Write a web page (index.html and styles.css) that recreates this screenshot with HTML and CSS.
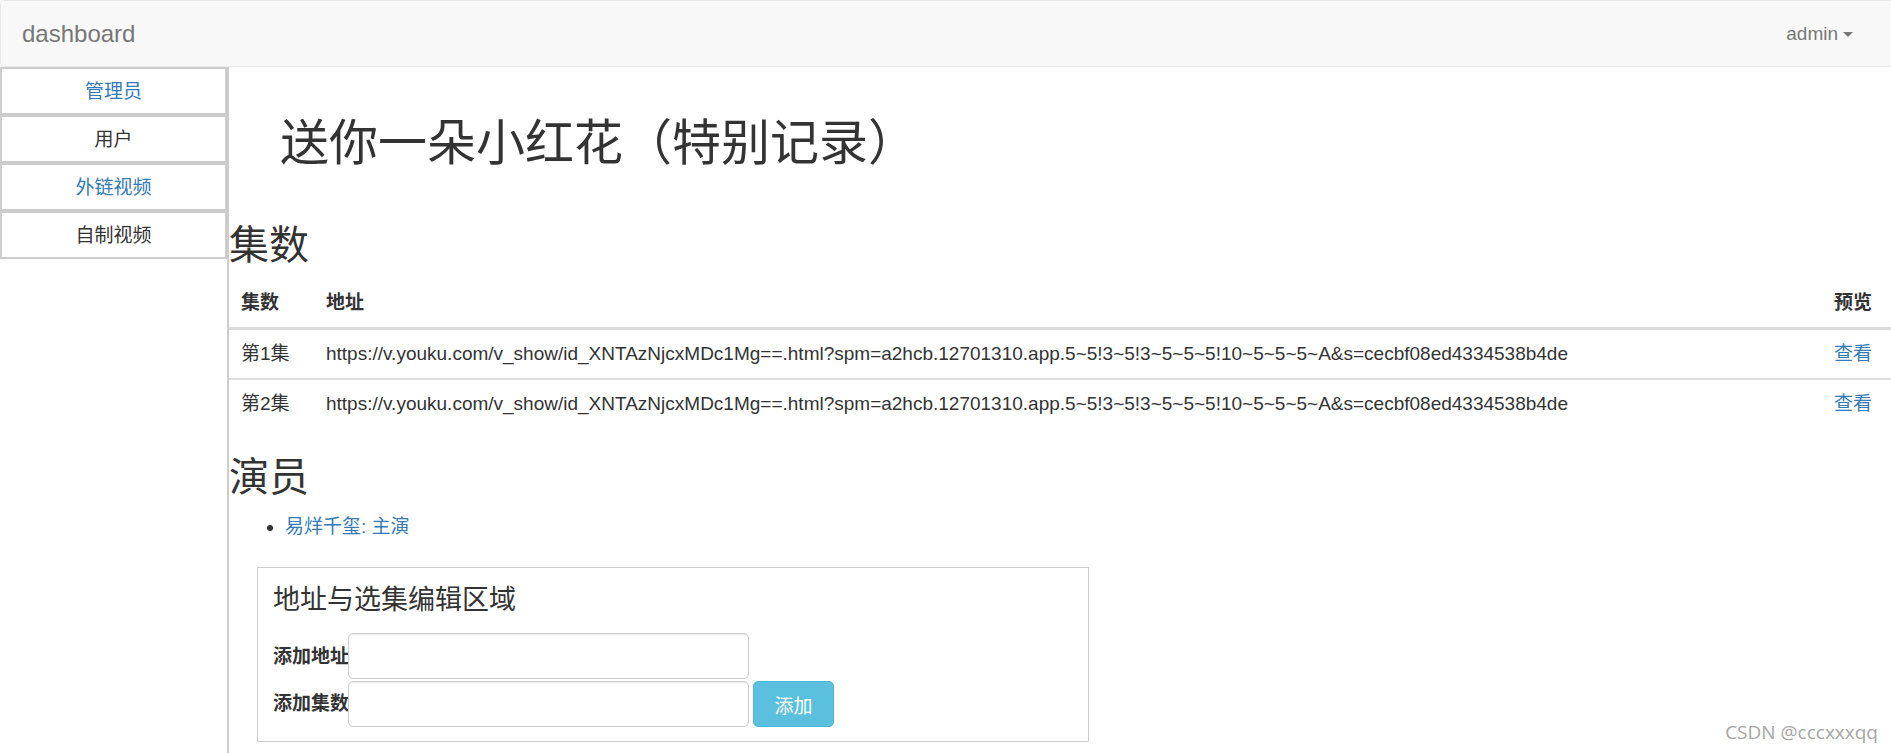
FILE: index.html
```html
<!DOCTYPE html>
<html>

	<head>
		<meta charset="utf-8" />
		<title>dashboard</title>
		<link rel="stylesheet" href="styles.css">
	</head>

	<body>
		<div class="navbar">
			<a class="brand" href="#">dashboard</a>
			<a class="user" href="#">admin<span class="caret"></span></a>
		</div>

		<div class="wrap">
			<div class="sidebar">
				<a class="side-item link" href="#">管理员</a>
				<a class="side-item" href="#">用户</a>
				<a class="side-item link" href="#">外链视频</a>
				<a class="side-item" href="#">自制视频</a>
			</div>

			<div class="main">
				<h1 class="page-title">送你一朵小红花（特别记录）</h1>

				<h2>集数</h2>
				<table class="list">
					<colgroup>
						<col class="col-num" />
						<col />
						<col class="col-view" />
					</colgroup>
					<thead>
						<tr>
							<th>集数</th>
							<th>地址</th>
							<th>预览</th>
						</tr>
					</thead>
					<tbody>
						<tr>
							<td>第1集</td>
							<td>https://v.youku.com/v_show/id_XNTAzNjcxMDc1Mg==.html?spm=a2hcb.12701310.app.5~5!3~5!3~5~5~5!10~5~5~5~A&amp;s=cecbf08ed4334538b4de</td>
							<td><a href="#">查看</a></td>
						</tr>
						<tr>
							<td>第2集</td>
							<td>https://v.youku.com/v_show/id_XNTAzNjcxMDc1Mg==.html?spm=a2hcb.12701310.app.5~5!3~5!3~5~5~5!10~5~5~5~A&amp;s=cecbf08ed4334538b4de</td>
							<td><a href="#">查看</a></td>
						</tr>
					</tbody>
				</table>

				<h2 class="actors">演员</h2>
				<ul class="actor-list">
					<li><a href="#">易烊千玺: 主演</a></li>
				</ul>

				<div class="edit-box">
					<h3>地址与选集编辑区域</h3>
					<div class="form-row">
						<label>添加地址</label><input type="text" />
					</div>
					<div class="form-row">
						<label>添加集数</label><input type="text" /><button type="button">添加</button>
					</div>
				</div>
			</div>
		</div>

		<div class="mark">CSDN @cccxxxqq</div>
	</body>

</html>
```

FILE: styles.css
```css
* {
	box-sizing: border-box;
}

body {
	margin: 0;
	font-family: "Liberation Sans", "Noto Sans CJK SC", sans-serif;
	font-size: 19px;
	line-height: 27px;
	color: #333;
	background: #fff;
	position: relative;
	min-height: 753px;
	overflow: hidden;
}

a {
	color: #337ab7;
	text-decoration: none;
}

.navbar {
	height: 67px;
	background: #f8f8f8;
	border: 1px solid #e7e7e7;
	border-right: 0;
	border-radius: 5px 0 0 5px;
	display: flex;
	align-items: center;
	justify-content: space-between;
	padding: 0 38px 0 21px;
}

.brand {
	color: #777;
	font-size: 24px;
	line-height: 27px;
}

.user {
	color: #777;
	font-size: 19px;
	display: flex;
	align-items: center;
}

.caret {
	display: inline-block;
	width: 0;
	height: 0;
	margin-left: 5px;
	margin-top: 2px;
	border-top: 5px solid #777;
	border-left: 5px solid transparent;
	border-right: 5px solid transparent;
}

.wrap {
	display: flex;
	min-height: 686px;
}

.sidebar {
	width: 229px;
	flex-shrink: 0;
	border-right: 2px solid #ccc;
}

.side-item {
	display: block;
	height: 48px;
	padding: 9px 0 8px;
	border: 2px solid #ccc;
	text-align: center;
	color: #333;
}

.side-item.link {
	color: #337ab7;
}

.main {
	flex: 1;
	min-width: 0;
}

.page-title {
	font-size: 49px;
	font-weight: normal;
	line-height: 54px;
	margin: 49px 0 53px 51px;
}

h2 {
	font-size: 40px;
	font-weight: normal;
	line-height: 44px;
	margin: 23px 0 11px;
}

.list {
	width: 100%;
	table-layout: fixed;
	border-collapse: collapse;
	margin-bottom: 27px;
}

.col-num {
	width: 85px;
}

.col-view {
	width: 69px;
}

.list th,
.list td {
	text-align: left;
	padding: 10px 12px 11px;
	white-space: nowrap;
}

.list th {
	font-weight: bold;
	padding: 11px 12px;
	border-bottom: 3px solid #ddd;
}

.list td {
	border-top: 2px solid #ddd;
}

.list tbody tr:first-child td {
	border-top: 0;
}

.actor-list {
	margin: 14px 0 0;
	padding-left: 56px;
}

.edit-box {
	margin: 27px 0 0 28px;
	width: 832px;
	border: 1px solid #ccc;
	padding: 0 15px 13px;
}

.edit-box h3 {
	font-size: 27px;
	font-weight: normal;
	line-height: 30px;
	margin: 17px 0 18px;
}

.form-row {
	display: flex;
	align-items: center;
	margin-bottom: 1px;
}

.form-row label {
	font-weight: bold;
	white-space: nowrap;
	margin-right: -1px;
}

.form-row input {
	width: 401px;
	height: 46px;
	border: 1px solid #ccc;
	border-radius: 5px;
	box-shadow: inset 0 1px 1px rgba(0, 0, 0, .075);
	font-size: 19px;
	padding: 0 12px;
}

.form-row button {
	width: 81px;
	height: 46px;
	margin: 1px 0 0 4px;
	background: #5bc0de;
	border: 1px solid #46b8da;
	border-radius: 5px;
	color: #fff;
	font-family: "Liberation Sans", "Noto Sans CJK SC", sans-serif;
	font-size: 19px;
}

.mark {
	position: absolute;
	right: 13px;
	top: 719px;
	font-family: "Open Sans", sans-serif;
	font-size: 19px;
	line-height: 26px;
	color: #a6a6a6;
}
```
